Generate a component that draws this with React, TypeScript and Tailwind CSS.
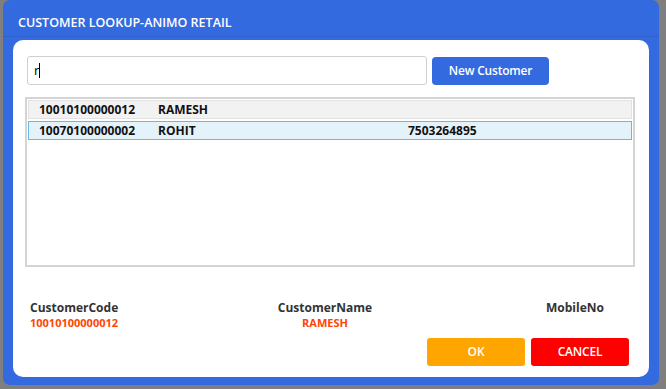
const rows = [
  { code: "10010100000012", name: "RAMESH", mobile: "" },
  { code: "10070100000002", name: "ROHIT", mobile: "7503264895" },
];

export default function App() {
  return (
    <div
      className="w-[666px] h-[389px] bg-[#7f7f7f] overflow-hidden"
      style={{ fontFamily: '"Open Sans", "Noto Sans", sans-serif' }}
    >
      <div className="ml-[3px] w-[656px] h-[385px] bg-[#346ae0] rounded-[7px] flex flex-col">
        <div className="h-[40px] flex flex-col">
          <div className="h-[36px] flex items-end pl-[15px] pb-[3px] text-white text-[12.5px] font-semibold">
            CUSTOMER LOOKUP-ANIMO RETAIL
          </div>
          <div className="h-px bg-[#2f60cc]" />
        </div>
        <div className="ml-[10px] w-[636px] h-[337px] bg-white rounded-[10px] flex flex-col px-[12px]">
          <div className="flex items-center mt-[16px] gap-[5px]">
            <div className="ml-[2px] w-[400px] h-[29px] border border-[#d0d0d0] rounded-[3px] flex items-center pl-[6px] text-[13px] text-black">
              r<span className="w-px h-[15px] bg-black" />
            </div>
            <button className="w-[117px] h-[28px] bg-[#346ae0] rounded-[4px] text-white text-[12px] font-semibold tracking-[-0.2px]">
              New Customer
            </button>
          </div>
          <div className="mt-[12px] w-[610px] h-[170px] border-2 border-[#d4d4d4] p-[1px] flex flex-col gap-[2px]">
            {rows.map((r, i) => (
              <div
                key={r.code}
                className={
                  i === 1
                    ? "h-[19px] flex items-center bg-[#e4f2fa] border border-[#69b7e6] text-[12px] font-bold text-[#111]"
                    : "h-[19px] flex items-center bg-[#f2f2f2] border border-[#e2e2e2] text-[12px] font-bold text-[#111]"
                }
              >
                <span className="w-[129px] pl-[10px]">{r.code}</span>
                <span className="w-[250px]">{r.name}</span>
                <span>{r.mobile}</span>
              </div>
            ))}
          </div>
          <div className="mt-[33px] flex text-[12px] font-bold text-[#333]">
            <div className="w-[200px] pl-[5px] flex flex-col items-start">
              <span className="leading-[16px]">CustomerCode</span>
              <span className="leading-[14px] text-[11px] text-[#ff4500]">10010100000012</span>
            </div>
            <div className="w-[200px] flex flex-col items-center">
              <span className="leading-[16px]">CustomerName</span>
              <span className="leading-[14px] text-[11px] text-[#ff4500]">RAMESH</span>
            </div>
            <div className="ml-[100px] w-[100px] flex flex-col items-center">
              <span className="leading-[16px]">MobileNo</span>
            </div>
          </div>
          <div className="mt-[8px] flex justify-end gap-[6px] pr-[8px]">
            <button className="w-[98px] h-[28px] bg-[#ffa500] rounded-[3px] text-white text-[12px] font-semibold">
              OK
            </button>
            <button className="w-[98px] h-[28px] bg-[#ff0000] rounded-[3px] text-white text-[12px] font-semibold tracking-[-0.2px]">
              CANCEL
            </button>
          </div>
        </div>
      </div>
    </div>
  );
}
